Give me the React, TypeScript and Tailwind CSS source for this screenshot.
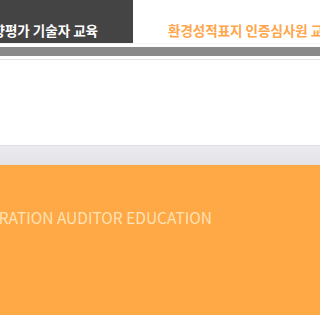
export default function App() {
  return (
    <div className="w-[320px] h-[315px] overflow-hidden bg-white" style={{ fontFamily: '"Noto Sans CJK KR", "Noto Sans", sans-serif' }}>
      <div className="flex h-[44px] border-b border-[#f4f4f4]">
        <div className="w-[133px] shrink-0 bg-[#444444] flex items-end justify-end pr-[35px] pb-[6px] overflow-hidden whitespace-nowrap">
          <span className="text-[13.5px] font-bold text-white leading-none">환경영향평가 기술자 교육</span>
        </div>
        <div className="flex-1 flex items-end pl-[35px] pb-[6px] overflow-hidden whitespace-nowrap">
          <span className="text-[13.5px] font-bold text-[#ffa54a] leading-none">환경성적표지 인증심사원 교육</span>
        </div>
      </div>
      <div className="mt-[3px] h-[9px] bg-[#8a8a8a]" />
      <div className="mt-[3px] h-px bg-[#e2e2e2]" />
      <div className="h-[85px]" />
      <div className="h-[20px] border-t border-[#dedee2] bg-gradient-to-b from-[#ececf0] to-[#e3e3e7]" />
      <div className="h-[150px] bg-[#ffa846] pt-[45px]">
        <div className="w-[212px] flex justify-end overflow-hidden whitespace-nowrap">
          <span className="text-[15.5px] text-[#ffe2b5] leading-none">ENVIRONMENTAL DECLARATION AUDITOR EDUCATION</span>
        </div>
      </div>
    </div>
  );
}
